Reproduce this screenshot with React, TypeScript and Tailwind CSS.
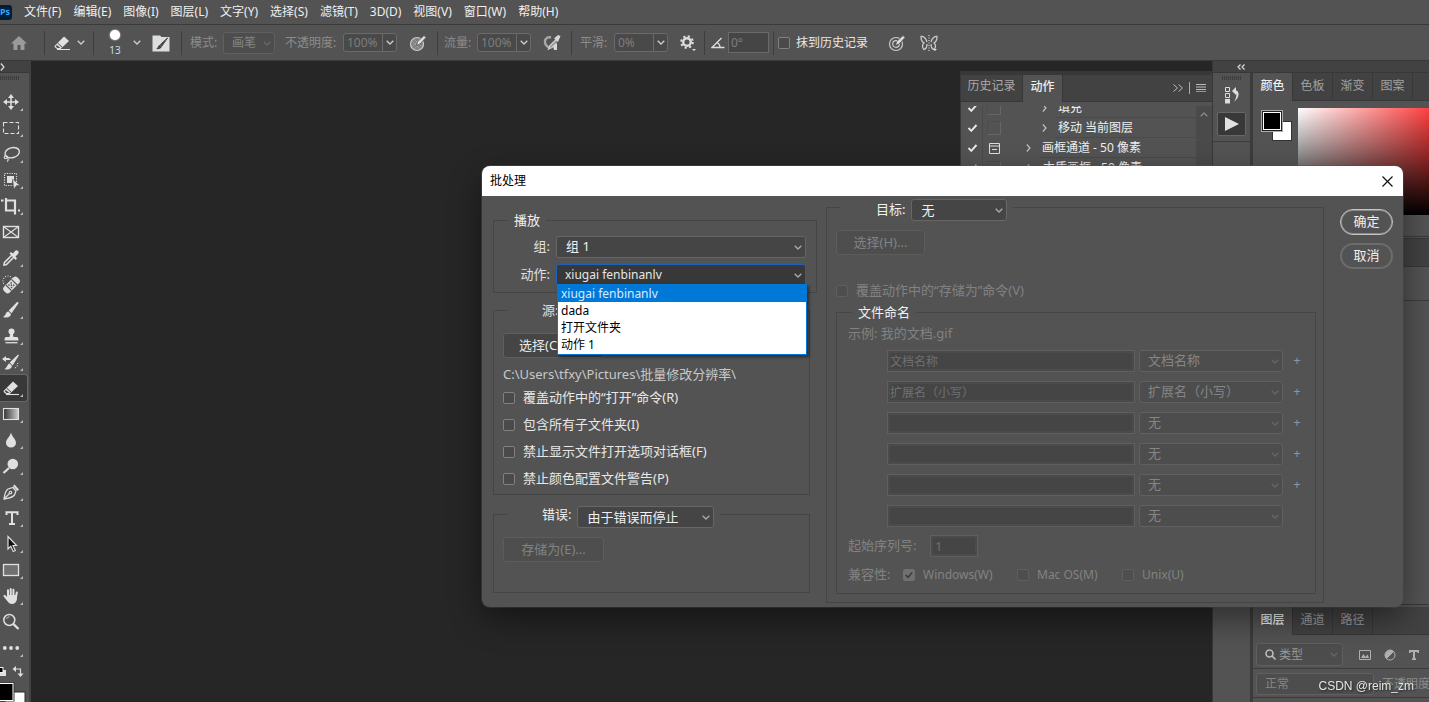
import { useId } from "react";
import type { ReactNode } from "react";

const menus = ["文件(F)", "编辑(E)", "图像(I)", "图层(L)", "文字(Y)", "选择(S)", "滤镜(T)", "3D(D)", "视图(V)", "窗口(W)", "帮助(H)"];

function Chevron({ className = "" }: { className?: string }) {
  return (
    <svg viewBox="0 0 8 5" className={`h-[5px] w-2 ${className}`} fill="none" stroke="currentColor" strokeWidth="1.3">
      <path d="M0.7 0.7 4 4 7.3 0.7" />
    </svg>
  );
}

function AngleRight({ className = "" }: { className?: string }) {
  return (
    <svg viewBox="0 0 5 8" className={`h-2 w-[5px] ${className}`} fill="none" stroke="currentColor" strokeWidth="1.2">
      <path d="M0.8 0.5 4 4 0.8 7.5" />
    </svg>
  );
}

function Select({
  id,
  label,
  options,
  disabled = false,
  open = false,
  className = "",
}: {
  id?: string;
  label?: string;
  options: string[];
  disabled?: boolean;
  open?: boolean;
  className?: string;
}) {
  const look = open
    ? "border-[#1b62b8] bg-[#383838] pl-2 text-xs text-[#e6e6e6]"
    : disabled
      ? "border-[#606060] bg-[#4d4d4d] pl-2 text-[#858585]"
      : "border-[#666] bg-[#454545] pl-[9px] text-[#f0f0f0]";
  return (
    <div className={`grid h-[22px] ${className}`}>
      <select
        id={id}
        aria-label={label}
        disabled={disabled}
        className={`col-start-1 row-start-1 w-full appearance-none rounded-[3px] border pr-4 outline-none disabled:opacity-100 ${look}`}
      >
        {options.map((o) => (
          <option key={o}>{o}</option>
        ))}
      </select>
      <Chevron
        className={`pointer-events-none col-start-1 row-start-1 mt-px mr-1 self-center justify-self-end ${disabled ? "text-[#666]" : "text-[#aaa]"}`}
      />
    </div>
  );
}

function Check({ children, disabled = false, checked = false }: { children: ReactNode; disabled?: boolean; checked?: boolean }) {
  const id = useId();
  return (
    <div className={`flex items-center gap-2 ${disabled ? "text-[#828282]" : "text-[#e8e8e8]"}`}>
      <div className="grid size-3 place-items-center">
        <input
          id={id}
          type="checkbox"
          disabled={disabled}
          defaultChecked={checked}
          className={`col-start-1 row-start-1 size-3 appearance-none rounded-[2px] border ${
            disabled ? "border-[#5f5f5f] bg-[#4e4e4e] checked:border-[#707070] checked:bg-[#707070]" : "border-[#808080] bg-[#4a4a4a]"
          }`}
        />
        {checked && (
          <svg viewBox="0 0 8 8" className="pointer-events-none col-start-1 row-start-1 size-2" fill="none" stroke="#3c3c3c" strokeWidth="1.6">
            <path d="M0.8 4 3 6.4 7.2 1.4" />
          </svg>
        )}
      </div>
      <label htmlFor={id}>{children}</label>
    </div>
  );
}

function ComboBox({ label, value }: { label: string; value: string }) {
  return (
    <div className="flex h-[19px] w-[54px] shrink-0 rounded-[3px] border border-[#6a6a6a] bg-[#494949]">
      <input aria-label={label} defaultValue={value} disabled className="w-[38px] min-w-0 pl-[3px] text-[#7d7d7d]" />
      <button aria-label={`${label} ▾`} className="grid flex-1 place-items-center border-l border-[#6a6a6a] text-[#ccc]">
        <Chevron />
      </button>
    </div>
  );
}

const Sep = () => <div className="h-6 w-px shrink-0 bg-[#3e3e3e]" />;

function Eraser() {
  return (
    <>
      <path d="M4 15.500 13 6.500 18 11 9.500 19H6L3.500 17Z" fill="#e0e0e0" stroke="none" />
      <path d="M6.500 13 11.500 17.500" stroke="#4a4a4a" strokeWidth="1" />
      <path d="M5.800 15 9.300 18H6.600L4.800 16.600Z" fill="#4a4a4a" stroke="none" />
      <path d="M6 19.500H19" />
    </>
  );
}

type Tool = { name: string; art: ReactNode; corner?: boolean; active?: boolean };

const tools: Tool[] = [
  {
    name: "移动",
    art: (
      <>
        <path d="M11 7V19M5 13H17" strokeWidth="1.500" />
        <path d="M11 5 14 9H8ZM11 21 8 17H14ZM3 13 7 10V16ZM19 13 15 16V10Z" fill="#e0e0e0" stroke="none" />
      </>
    ),
  },
  { name: "选框", art: <rect x="3.500" y="7.500" width="15" height="11" strokeDasharray="4 2" /> },
  {
    name: "套索",
    art: (
      <>
        <ellipse cx="12.200" cy="11.700" rx="7.300" ry="5" transform="rotate(-14 12.200 11.700)" strokeWidth="1.400" />
        <path d="M5.500 14.500C3.500 15.500 4 18 6 17.500S8 15 6 14.800M7.500 17.500C9 18.500 8 20 7 20.500" />
      </>
    ),
  },
  {
    name: "对象选择",
    art: (
      <>
        <rect x="4.500" y="6.500" width="12" height="12" strokeDasharray="1.200 1.200" />
        <path d="M7 9H14V14L12 13V16H7Z" fill="#e0e0e0" stroke="none" />
        <path d="M12.500 12 20 18.500H16.500L14 22Z" fill="#e0e0e0" stroke="#535353" strokeWidth=".5" />
      </>
    ),
  },
  { name: "裁剪", art: <path d="M1 7.500H3.500M6 5V17.500H16M18 17.500H20M7 7.500H15V21.500" strokeWidth="2.200" /> },
  {
    name: "图框",
    art: (
      <>
        <rect x="3.500" y="7.500" width="15" height="11" strokeWidth="1.400" />
        <path d="M3.500 7.500 18.500 18.500M18.500 7.500 3.500 18.500" />
      </>
    ),
    corner: false,
  },
  {
    name: "吸管",
    art: (
      <>
        <path d="M12 10 4.500 17.500 4 20 6.500 19.500 14 12" strokeWidth="1.600" />
        <path d="M9.500 8.500 11 7 13 8.500 15 6C17 4 20 7 18 9L15.500 11.500 17 13.500 15.500 15Z" fill="#e0e0e0" stroke="none" />
      </>
    ),
  },
  {
    name: "修复",
    art: (
      <>
        <circle cx="8" cy="10" r="5" strokeDasharray="1 1.500" />
        <g transform="rotate(-45 11.500 14)">
          <rect x="2" y="10" width="19" height="8" rx="3" fill="#e0e0e0" stroke="none" />
          <path d="M7.500 10V18M15.500 10V18" stroke="#535353" />
          <g fill="#535353" stroke="none">
            <rect x="9" y="11.500" width="1.500" height="1.500" />
            <rect x="12" y="11.500" width="1.500" height="1.500" />
            <rect x="10.500" y="13.200" width="1.500" height="1.500" />
            <rect x="9" y="15" width="1.500" height="1.500" />
            <rect x="12" y="15" width="1.500" height="1.500" />
          </g>
        </g>
      </>
    ),
  },
  {
    name: "画笔",
    art: (
      <>
        <path d="M17.500 5.500 9.500 13.500 11.500 15.500 18 6Z" fill="#e0e0e0" />
        <path d="M8.500 14.500C5.500 14.500 6.500 18 3 20 7 21.500 11 20 11 17Z" fill="#e0e0e0" stroke="none" />
      </>
    ),
  },
  {
    name: "图章",
    art: (
      <>
        <circle cx="11.500" cy="8.500" r="3" fill="#e0e0e0" stroke="none" />
        <path d="M10.300 10H12.700L13.500 14H17C18.500 14 18.500 17.500 18.500 17.500H4.500S4.500 14 6 14H9.500Z" fill="#e0e0e0" stroke="none" />
        <path d="M5.500 19.700H17.500" strokeWidth="1.300" />
      </>
    ),
  },
  {
    name: "历史记录画笔",
    art: (
      <>
        <path d="M18.500 6 10.500 13.500 12.500 15.500Z" fill="#e0e0e0" />
        <path d="M9.500 14.500C7 15 8 18 4.500 20 8 21.500 11.500 20 12 17Z" fill="#e0e0e0" stroke="none" />
        <path d="M2 10 6 7V13ZM6 9H9L11 11H6Z" fill="#e0e0e0" stroke="none" />
        <path d="M15 19C17.500 17.500 18 15.500 17.500 12.500" strokeDasharray="1 1.500" />
      </>
    ),
  },
  { name: "橡皮擦", art: <Eraser />, active: true },
  {
    name: "渐变",
    art: (
      <>
        <defs>
          <linearGradient id="tool-gradient">
            <stop offset="0" stopColor="#333" />
            <stop offset="1" stopColor="#d0d0d0" />
          </linearGradient>
        </defs>
        <rect x="3.500" y="7.500" width="15" height="11" fill="url(#tool-gradient)" />
      </>
    ),
  },
  { name: "模糊", art: <path d="M11 5.500C12 10 16 12 16 16A5 4.500 0 0 1 6 16C6 12 10 10 11 5.500Z" fill="#e0e0e0" stroke="none" /> },
  {
    name: "减淡",
    art: (
      <>
        <circle cx="12.800" cy="11" r="5.300" fill="#e0e0e0" stroke="none" />
        <path d="M9 15 3.500 20" strokeWidth="2.200" />
      </>
    ),
  },
  {
    name: "钢笔",
    art: (
      <>
        <path d="M4 20C4.500 16 5 12 8 10L13 8.500 16 12 14.500 16C12 19 8 19.500 4 20ZM4.500 19.500 9.500 14.500" strokeWidth="1.300" />
        <circle cx="10.500" cy="13.500" r="1.300" />
        <path d="M13 7 14.500 5.500 19 10.500 17.500 12Z" fill="#e0e0e0" stroke="none" />
      </>
    ),
  },
  { name: "文字", art: <path d="M6.500 10V7.300H17.500V10M12 6.800V19.500M9 19H15" strokeWidth="2" /> },
  {
    name: "路径选择",
    art: <path d="M8 5.500V18L10.800 15.200 13.300 20.500 15.300 19.500 13 14.500H16.500Z" fill="#111" strokeWidth="1.200" />,
  },
  { name: "矩形", art: <rect x="3.500" y="7.500" width="15" height="11" fill="#707070" strokeWidth="1.300" /> },
  {
    name: "抓手",
    art: (
      <g strokeLinecap="round">
        <path d="M8 13V7.300M10.700 12V6M13.400 12.500V6.800M16 14 16.800 9.500M4.500 12.800 8 17" strokeWidth="2" />
        <path d="M7 12H17V16C16.500 19 14.500 21 12 21 8.500 21 7.500 18 4 13.500L5 12.500 7 14Z" fill="#e0e0e0" stroke="none" />
      </g>
    ),
  },
  {
    name: "缩放",
    art: (
      <>
        <circle cx="9.300" cy="11" r="5.500" strokeWidth="1.500" />
        <path d="M6.500 10A3.500 3.500 0 0 1 9.500 7.800" strokeWidth=".8" />
        <path d="M13.500 15.200 18.500 20" strokeWidth="2.300" />
      </>
    ),
    corner: false,
  },
  {
    name: "更多工具",
    art: (
      <g fill="#e0e0e0" stroke="none">
        <circle cx="4.800" cy="13" r="1.900" />
        <circle cx="11" cy="13" r="1.900" />
        <circle cx="17.200" cy="13" r="1.900" />
      </g>
    ),
  },
];

function Brush({ children }: { children?: ReactNode }) {
  return (
    <svg viewBox="0 0 18 18" className="size-[18px]" fill="none" stroke="#ccc" strokeWidth="1.200">
      {children}
      <path d="M15 1.500 17 3.500 11 10 7.500 11.500 8.500 7.800Z" fill="#e0e0e0" stroke="#535353" strokeWidth=".8" />
    </svg>
  );
}

function OptionsBar() {
  return (
    <div className="flex h-9 shrink-0 items-center border-b border-[#3a3a3a] bg-[#535353] text-xs text-[#8c8c8c]">
      <button aria-label="主页" className="flex w-11 shrink-0 justify-center">
        <svg viewBox="0 0 18 16" className="mr-1.5 h-4 w-[18px]" fill="#9a9a9a">
          <path d="M9 1 17 8.500H14.500V15H10.500V10H7.500V15H3.500V8.500H1Z" />
        </svg>
      </button>
      <Sep />
      <button aria-label="橡皮擦工具" className="flex w-12 shrink-0 items-center gap-1 pl-1.5 text-[#ccc]">
        <svg viewBox="0 0 22 26" className="h-[26px] w-[22px]" fill="none" stroke="#e0e0e0">
          <Eraser />
        </svg>
        <Chevron />
      </button>
      <Sep />
      <button aria-label="画笔预设" className="flex w-[52px] shrink-0 items-center gap-3 pl-[15px] text-[#ccc]">
        <span className="flex w-3 flex-col items-center text-[10px] leading-3 text-[#c4dcf0]">
          <span className="mb-1 size-2.5 rounded-full bg-white shadow-[0_0_2px_#fff]" />
          13
        </span>
        <Chevron className="shrink-0" />
      </button>
      <button aria-label="画笔设置" className="ml-1.5 flex w-[29px] shrink-0">
        <svg viewBox="0 0 18 18" className="size-[18px]">
          <path d="M.5 1.500H8L9.500 3H17.500V17.500H.5Z" fill="#ddd" />
          <path d="M15.500 4 8.500 10.500 9.500 12.500Z" fill="#444" stroke="#444" />
          <path d="M8 11C6 11 6.500 13.500 4 15 7 15.500 9.500 14.500 9.500 13Z" fill="#444" />
        </svg>
      </button>
      <Sep />
      <span className="w-[33px] shrink-0 pl-2 whitespace-nowrap">模式:</span>
      <Select label="模式" options={["画笔"]} disabled className="ml-2 w-[52px] shrink-0" />
      <span className="w-[68px] shrink-0 pl-2.5 whitespace-nowrap">不透明度:</span>
      <ComboBox label="不透明度" value="100%" />
      <button aria-label="不透明度压力" className="flex w-10 shrink-0 pl-3">
        <Brush>
          <circle cx="8" cy="10" r="6.500" fill="#808080" />
          <path d="M3 7 11 15M5 5 13 13M3 13 11 5M5 15 13 8" stroke="#a8a8a8" strokeWidth=".7" />
        </Brush>
      </button>
      <Sep />
      <span className="w-[39px] shrink-0 pl-1.5 whitespace-nowrap">流量:</span>
      <ComboBox label="流量" value="100%" />
      <button aria-label="喷枪" className="flex w-10 shrink-0 pl-3">
        <svg viewBox="0 0 18 18" className="size-[18px]" fill="none" stroke="#ccc">
          <path d="M8 3.500C3 2 .5 7 3 11 4 12.500 5 13 6 13.500" strokeWidth="2.400" stroke="#a8a8a8" />
          <path d="M16.500 2.500 7 11.500 5.500 15 9 13.500 13 10" strokeWidth="1.300" fill="#999" />
          <path d="M11 4.500 15 8 17.500 2 15 1ZM10 12 14 9V16H11Z" fill="#d8d8d8" stroke="none" />
        </svg>
      </button>
      <Sep />
      <span className="w-[42px] shrink-0 pl-2 whitespace-nowrap">平滑:</span>
      <ComboBox label="平滑" value="0%" />
      <button aria-label="平滑选项" className="flex w-9 shrink-0 pl-3">
        <svg viewBox="0 0 16 18" className="h-[18px] w-4" fill="none" stroke="#ddd">
          <circle cx="7" cy="8" r="3.800" strokeWidth="2.400" />
          <circle cx="7" cy="8" r="5.800" strokeWidth="2" strokeDasharray="2.200 2.355" />
          <path d="M12 15H16L14 17Z" fill="#ddd" stroke="none" />
        </svg>
      </button>
      <Sep />
      <svg viewBox="0 0 14 12" className="ml-1.5 h-3 w-3.5 shrink-0" fill="none" stroke="#ddd" strokeWidth="1.300">
        <path d="M10.500 1 1 10.500H13.500M6 5.500C8 6.500 9 8 9 10.500" />
      </svg>
      <input
        aria-label="角度"
        disabled
        defaultValue="0°"
        className="ml-[3px] h-[21px] w-[41px] shrink-0 border border-[#6a6a6a] bg-[#454545] pl-0.5 text-[#7d7d7d]"
      />
      <div className="ml-1 shrink-0">
        <Sep />
      </div>
      <div className="ml-1 shrink-0 pr-5 whitespace-nowrap *:gap-1.5">
        <Check>抹到历史记录</Check>
      </div>
      <button aria-label="大小压力" className="flex w-8 shrink-0">
        <Brush>
          <circle cx="8" cy="10" r="6.500" />
          <circle cx="8" cy="10" r="3.300" />
        </Brush>
      </button>
      <button aria-label="对称" className="flex shrink-0">
        <svg viewBox="0 0 18 18" className="size-[18px]" fill="none" stroke="#ccc" strokeWidth="1.300">
          <path d="M7 8C6 4 3 2 1 2.500 1 5 2 8 4 9 2 10 2 14 4 15.500 6 15 7 13 7 10M11 8C12 4 15 2 17 2.500 17 5 16 8 14 9 16 10 16 14 14 15.500 12 15 11 13 11 10" />
          <path d="M9 1V17" strokeDasharray="1 1.500" />
          <path d="M13 15H17L15 17Z" fill="#ddd" stroke="none" />
        </svg>
      </button>
    </div>
  );
}

const Grip = ({ className = "" }: { className?: string }) => (
  <div className={`h-1 w-5 bg-[repeating-linear-gradient(90deg,#3c3c3c_0_1px,transparent_1px_2px)] ${className}`} />
);

function Toolbar() {
  return (
    <aside className="flex w-[31px] shrink-0 flex-col border-r-2 border-[#424242] bg-[#535353]">
      <div className="flex h-3 shrink-0 items-center border-b border-[#383838] bg-[#424242] text-[#ddd]">
        <AngleRight className="h-1.5" />
      </div>
      <div className="h-4 shrink-0 pt-[3px]">
        <Grip />
      </div>
      {tools.map((t) => (
        <button
          key={t.name}
          aria-label={t.name}
          className={`h-[26px] w-[27px] shrink-0 ${t.active ? "rounded-r-[3px] bg-[#383838] ring-1 ring-[#666]" : ""}`}
        >
          <svg viewBox="0 0 26 26" className="size-[26px]" fill="none" stroke="#e0e0e0" strokeWidth="1.100">
            {t.art}
            {t.corner !== false && <path d="M23 19V22H20Z" fill="#bbb" stroke="none" />}
          </svg>
        </button>
      ))}
      <svg viewBox="0 0 26 42" className="h-[42px] w-[26px] shrink-0" fill="none">
        <rect x="0" y="9" width="6" height="6" fill="#e0e0e0" />
        <rect x="-2" y="6.500" width="5" height="5" fill="#000" stroke="#eee" />
        <path d="M15 8H20.500V14" stroke="#ddd" strokeWidth="1.200" />
        <path d="M16 5V11L12.500 8ZM17.500 12.500H23.500L20.500 16Z" fill="#ddd" />
        <rect x="5" y="31" width="20" height="20" fill="#fff" stroke="#2a2a2a" />
        <rect x="-6" y="21.500" width="20.500" height="19" fill="#333" />
        <rect x="-6" y="22.500" width="19" height="17" fill="#000" stroke="#fff" />
      </svg>
    </aside>
  );
}

function ActionRow({ text, indent, dialog = false }: { text: string; indent: boolean; dialog?: boolean }) {
  return (
    <li className="flex h-5 shrink-0 items-center">
      <svg viewBox="0 0 10 8" className="ml-1.5 h-2 w-[11px]" fill="none" stroke="#e8e8e8" strokeWidth="1.900">
        <path d="M1 4 3.800 6.800 9 1" />
      </svg>
      <span className="ml-1 h-full w-px bg-[#4a4a4a]" />
      {dialog ? (
        <svg viewBox="0 0 11 11" className="ml-1.5 size-[11px]" fill="none" stroke="#ddd">
          <path d="M.5 .5H10.500V10.500H.5ZM.5 3H10.500M3 6.500H8" />
        </svg>
      ) : (
        <span className="ml-1 size-3.5 border border-t-[#4c4c4c] border-r-[#666] border-b-[#666] border-l-[#4c4c4c]" />
      )}
      <AngleRight className={`text-[#c0c0c0] ${indent ? "ml-[41px]" : "ml-[26px]"}`} />
      <span className="ml-2 flex h-full flex-1 items-center border-b border-[#4a4a4a] pl-[3px] whitespace-nowrap">{text}</span>
    </li>
  );
}

function ActionsPanel() {
  return (
    <section className="absolute top-[10px] right-0 h-40 w-[252px] border-t-4 border-l border-[#383838] bg-[#535353] text-xs text-[#f0f0f0]">
      <div className="flex h-[27px] bg-[#424242]">
        <button className="w-[62px] border-r border-b border-[#383838] pb-1 text-[#aaa]">历史记录</button>
        <button className="w-[39px] bg-[#535353] pb-1 font-medium">动作</button>
        <div className="flex flex-1 items-center justify-end border-b border-l border-[#383838] pr-1.5 text-[#bbb]">
          <svg viewBox="0 0 10 8" className="h-2 w-2.5" fill="none" stroke="#bbb">
            <path d="M.5 .5 4.500 4 .5 7.500M5.500 .5 9.500 4 5.500 7.500" />
          </svg>
          <span className="mx-1.5 h-3 w-px bg-[#aaa]" />
          <svg viewBox="0 0 10 8" className="h-2 w-2.5" stroke="#bbb">
            <path d="M0 .5H10M0 3H10M0 5.500H10M0 7.800H10" />
          </svg>
        </div>
      </div>
      <div className="flex h-32 pt-1">
        <div className="flex-1 overflow-hidden">
          <ul className="-mt-2 flex flex-col">
            <ActionRow text="填充" indent />
            <ActionRow text="移动 当前图层" indent />
            <ActionRow text="画框通道 - 50 像素" indent={false} dialog />
            <ActionRow text="木质画框 - 50 像素" indent={false} />
          </ul>
        </div>
        <div className="flex w-4 justify-center bg-[#4a4a4a] pt-1.5 text-[#888]">
          <Chevron className="rotate-180" />
        </div>
      </div>
    </section>
  );
}

function Tabs({ items, active }: { items: string[]; active?: string }) {
  return (
    <div className="flex h-7 shrink-0 bg-[#424242] text-xs text-[#a0a0a0]">
      {items.map((t) => (
        <button
          key={t}
          className={`w-10 shrink-0 border-r border-[#383838] pb-0.5 ${t === active ? "bg-[#535353] font-medium text-[#f0f0f0]" : "border-b"}`}
        >
          {t}
        </button>
      ))}
      <div className="flex-1 border-b border-[#383838]" />
    </div>
  );
}

function RightDock() {
  return (
    <aside className="flex w-[217px] shrink-0 flex-col border-l border-[#383838]">
      <div className="flex h-3 shrink-0 items-center border-b border-[#383838] bg-[#424242] pl-6">
        <svg viewBox="0 0 8 6" className="h-1.5 w-2" fill="none" stroke="#ddd" strokeWidth="1.200">
          <path d="M3.500 .5 1 3 3.500 5.500M7.500 .5 5 3 7.500 5.500" />
        </svg>
      </div>
      <div className="flex min-h-0 flex-1">
        <div className="flex w-[37px] shrink-0 flex-col items-center">
          <Grip className="mt-[3px] shrink-0" />
          <button aria-label="历史记录" className="mt-1.5 mb-2 shrink-0">
            <svg viewBox="0 0 16 18" className="h-[18px] w-4" fill="none" stroke="#ddd">
              <path d="M1.500 1.500H5.500V5.500H1.500ZM1.500 7.500H5.500V11.500H1.500Z" />
              <path d="M1 13H6V17.500H1Z" fill="#ddd" stroke="none" />
              <path d="M8 5 12 1V9ZM11 4C16 5 16 11 10 16 13 11 13 7 11 7Z" fill="#ddd" stroke="none" />
            </svg>
          </button>
          <button aria-label="动作" className="grid h-6 w-[29px] shrink-0 place-items-center rounded-[2px] border border-[#666] bg-[#383838]">
            <svg viewBox="0 0 14 14" className="size-3.5" fill="#e0e0e0">
              <path d="M0 0 14 7 0 14Z" />
            </svg>
          </button>
          <div className="mt-[5px] h-px w-full shrink-0 bg-[#3c3c3c]" />
        </div>
        <div className="flex min-w-0 flex-1 flex-col border-l-[3px] border-[#3c3c3c]">
          <Tabs items={["颜色", "色板", "渐变", "图案"]} active="颜色" />
          <div className="flex h-[136px] shrink-0 border-b border-[#3a3a3a] pt-[7px]">
            <svg viewBox="0 0 45 36" className="h-9 w-[45px] shrink-0">
              <rect x="19.500" y="13.500" width="19" height="19" fill="#fff" stroke="#333" />
              <rect x="8.500" y="2.500" width="21" height="21" fill="#222" stroke="#aaa" />
              <rect x="10.500" y="4.500" width="17" height="17" fill="#000" stroke="#fff" />
            </svg>
            <div className="h-[107px] flex-1 bg-[linear-gradient(to_bottom,transparent,#000),linear-gradient(to_right,#fff,#ff4040)]" />
          </div>
          <div className="mt-px h-[29px] shrink-0 border-y border-[#383838] bg-[#424242]" />
          <div className="h-[34px] shrink-0 border-b border-[#3c3c3c]" />
          <div className="h-[304px] shrink-0 border-b border-[#383838]" />
          <div className="mt-0.5 shrink-0">
            <Tabs items={["图层", "通道", "路径"]} active="图层" />
          </div>
          <div className="flex h-[34px] shrink-0 items-center gap-4 border-b border-[#3c3c3c] pt-1.5 pl-[3px] text-xs text-[#999]">
            <div className="grid h-[23px] w-[87px] shrink-0 items-center rounded-[3px] border border-[#606060] bg-[#4d4d4d]">
              <svg viewBox="0 0 11 11" className="col-start-1 row-start-1 ml-2 size-[11px]" fill="none" stroke="#bbb" strokeWidth="1.600">
                <circle cx="4.500" cy="4.500" r="3.500" />
                <path d="M7 7 10.500 10.500" />
              </svg>
              <select aria-label="图层筛选" className="col-start-1 row-start-1 w-full appearance-none pl-[22px]">
                <option>类型</option>
              </select>
              <Chevron className="pointer-events-none col-start-1 row-start-1 mr-1 justify-self-end text-[#666]" />
            </div>
            <div className="flex flex-1 items-center gap-[13px]">
              <svg viewBox="0 0 12 10" className="h-2.5 w-3 shrink-0" fill="none" stroke="#b0b0b0">
                <path d="M.5 .5H11.500V9.500H.5Z" />
                <path d="M2 8 4.500 4 6.500 7 8.500 4.500 10 8Z" fill="#b0b0b0" stroke="none" />
              </svg>
              <svg viewBox="0 0 12 12" className="size-3 shrink-0" fill="none" stroke="#b0b0b0">
                <circle cx="6" cy="6" r="5" />
                <path d="M2.500 9.500A5 5 0 0 1 9.500 2.500Z" fill="#b0b0b0" />
              </svg>
              <svg viewBox="0 0 10 10" className="size-2.5 shrink-0" fill="none" stroke="#b0b0b0" strokeWidth="2">
                <path d="M.6 3V1H9.400V3M5 1V9.500M3 9.200H7" />
              </svg>
            </div>
          </div>
          <div className="flex h-[29px] shrink-0 items-center border-b border-[#3c3c3c] pt-0.5 pl-[3px] text-xs whitespace-nowrap text-[#8a8a8a]">
            <Select label="混合模式" options={["正常"]} disabled className="mr-2 w-[118px] shrink-0" />
            不透明度:
          </div>
        </div>
      </div>
    </aside>
  );
}

const boxClass = "min-w-0 border border-[#454545]";
const disabledButton = "block h-[25px] rounded-[3px] border border-[#5c5c5c] bg-[#4e4e4e] text-[#828282]";

const nameRows = [
  { value: "文档名称", choice: "文档名称" },
  { value: "扩展名（小写）", choice: "扩展名（小写）" },
  { value: "", choice: "无" },
  { value: "", choice: "无" },
  { value: "", choice: "无" },
  { value: "", choice: "无" },
];

function BatchDialog() {
  return (
    <div
      role="dialog"
      aria-label="批处理"
      className="absolute top-[166px] right-[26px] w-[921px] rounded-lg bg-[#535353] text-[13px] text-[#e0e0e0] shadow-[0_12px_32px_rgba(0,0,0,0.45),0_0_0_1px_rgba(90,90,90,0.5)]"
    >
      <header className="flex h-[30px] items-center justify-between rounded-t-lg bg-white pr-2.5 pl-2 text-xs text-black">
        <h1>批处理</h1>
        <button aria-label="关闭">
          <svg viewBox="0 0 11 11" className="size-[11px]" stroke="#111" strokeWidth="1.200">
            <path d="M.5 .5 10.500 10.500M10.500 .5 .5 10.500" />
          </svg>
        </button>
      </header>
      <div className="flex pr-2.5 pb-1 pl-[11px]">
        <div className="w-[324px] shrink-0 pt-3.5">
          <fieldset className={`${boxClass} pr-2.5 pb-1.5`}>
            <legend className="ml-3.5 h-5 px-1.5 leading-5 text-[#f0f0f0]">播放</legend>
            <div className="flex items-center gap-1.5 pt-1.5">
              <label htmlFor="set" className="w-14 shrink-0 text-right">
                组:
              </label>
              <Select id="set" options={["组 1"]} className="flex-1" />
            </div>
            <div className="flex items-center gap-1.5 pt-1.5">
              <label htmlFor="action" className="w-14 shrink-0 text-right">
                动作:
              </label>
              <div className="relative flex-1">
                <Select id="action" options={["xiugai fenbinanlv"]} open />
                <ul
                  role="listbox"
                  aria-label="动作"
                  className="absolute top-5 left-px z-10 w-full border border-[#0078d7] bg-white pb-px text-xs leading-[17px] text-black shadow-[2px_2px_3px_rgba(0,0,0,0.5)] *:h-[17px] *:pl-[3px]"
                >
                  <li role="option" aria-selected="true" className="bg-[#0078d7] text-[#d9eaff]">
                    xiugai fenbinanlv
                  </li>
                  <li role="option" aria-selected="false">
                    dada
                  </li>
                  <li role="option" aria-selected="false">
                    打开文件夹
                  </li>
                  <li role="option" aria-selected="false">
                    动作 1
                  </li>
                </ul>
              </div>
            </div>
          </fieldset>

          <fieldset className={`${boxClass} mt-[9px] mr-[7px] pb-0.5 pl-[9px]`}>
            <legend className="ml-1 flex h-4 gap-1.5 pr-1 pl-[35px] leading-4">
              <label htmlFor="source">源:</label>
              <Select id="source" options={["文件夹"]} className="w-[240px]" />
            </legend>
            <button className="mt-[15px] block h-[25px] w-[101px] rounded-[3px] border border-[#5f5f5f] bg-[#454545] pl-[15px] text-left text-[#e8e8e8]">
              选择(C)...
            </button>
            <p className="mt-1.5 h-5 leading-5 text-[#c8c8c8]">C:\Users\tfxy\Pictures\批量修改分辨率\</p>
            <div className="*:h-[27px]">
              <Check>覆盖动作中的“打开”命令(R)</Check>
              <Check>包含所有子文件夹(I)</Check>
              <Check>禁止显示文件打开选项对话框(F)</Check>
              <Check>禁止颜色配置文件警告(P)</Check>
            </div>
          </fieldset>

          <fieldset className={`${boxClass} mt-[11px] mr-[7px] pb-[30px] pl-[9px]`}>
            <legend className="ml-1 flex h-4 gap-1.5 pr-1.5 pl-[35px] leading-4 text-[#f0f0f0]">
              <label htmlFor="errors">错误:</label>
              <Select id="errors" options={["由于错误而停止"]} className="w-[137px]" />
            </legend>
            <button disabled className={`${disabledButton} mt-[15px] w-[101px]`}>
              存储为(E)...
            </button>
          </fieldset>
        </div>

        <fieldset className={`${boxClass} mt-[3px] ml-[9px] flex-1 pr-[7px] pb-2 pl-[9px]`}>
          <legend className="ml-1 flex h-4 gap-1.5 pr-1.5 pl-9 leading-5 text-[#f0f0f0]">
            <label htmlFor="target">目标:</label>
            <Select id="target" options={["无"]} className="w-24" />
          </legend>
          <button disabled className={`${disabledButton} mt-[15px] w-[89px]`}>
            选择(H)...
          </button>
          <div className="mt-[26px] *:h-5">
            <Check disabled>覆盖动作中的“存储为”命令(V)</Check>
          </div>
          <fieldset className={`${boxClass} mt-px pr-2 pb-2 pl-[11px] text-[#828282]`}>
            <legend className="ml-1 h-5 px-1.5 leading-5 text-[#f0f0f0]">文件命名</legend>
            <p className="mt-px h-5 leading-5">示例: 我的文档.gif</p>
            <div className="mt-[7px] flex flex-col gap-[9px] pl-[39px]">
              {nameRows.map((r, i) => (
                <div key={i} className="flex h-[22px] items-center gap-1">
                  <input
                    aria-label={`文件名 ${i + 1}`}
                    disabled
                    defaultValue={r.value}
                    className="h-full min-w-0 flex-1 border border-[#5f5f5f] bg-[#454545] pl-0.5 text-xs text-[#707070] shadow-[inset_0_0_0_2px_#4b4b4b]"
                  />
                  <Select label={`命名规则 ${i + 1}`} options={[r.choice]} disabled className="w-36 shrink-0" />
                  {i < 5 ? <span className="w-5 shrink-0 text-center text-[#8496a8]">+</span> : <span className="w-5 shrink-0" />}
                </div>
              ))}
            </div>
            <div className="mt-2 flex h-[22px] items-center">
              <label htmlFor="serial" className="w-[82px]">
                起始序列号:
              </label>
              <input
                id="serial"
                disabled
                defaultValue="1"
                className="h-full w-12 border border-[#5f5f5f] bg-[#454545] pl-1 text-[#707070] shadow-[inset_0_0_0_2px_#4b4b4b]"
              />
            </div>
            <div className="mt-2 flex h-5 items-center">
              <span className="w-[55px]">兼容性:</span>
              <div className="flex text-xs">
                <div className="w-[114px]">
                  <Check disabled checked>
                    Windows(W)
                  </Check>
                </div>
                <div className="w-[105px]">
                  <Check disabled>Mac OS(M)</Check>
                </div>
                <Check disabled>Unix(U)</Check>
              </div>
            </div>
          </fieldset>
        </fieldset>

        <div className="ml-4 flex w-[53px] shrink-0 flex-col gap-2 pt-[13px] text-[#f0f0f0]">
          <button className="h-[26px] rounded-full border border-[#c4c4c4] ring-1 ring-[#8a8a8a] ring-inset">确定</button>
          <button className="h-[26px] rounded-full border-2 border-[#6c6c6c]">取消</button>
        </div>
      </div>
    </div>
  );
}

export default function App() {
  return (
    <div className="relative flex h-screen w-full flex-col overflow-hidden bg-[#535353] font-['Noto_Sans','Noto_Sans_CJK_SC',sans-serif] text-xs">
      <nav className="flex h-[25px] shrink-0 items-center gap-3 border-b border-[#3a3a3a] whitespace-nowrap text-[#f0f0f0]">
        <span className="flex h-[15px] w-3 items-center justify-end rounded-r-[3px] bg-[#001e36] pr-0.5 text-[9px] font-bold text-[#31a8ff]">Ps</span>
        {menus.map((m) => (
          <button key={m}>{m}</button>
        ))}
      </nav>
      <OptionsBar />
      <div className="flex min-h-0 flex-1">
        <Toolbar />
        <main className="relative min-w-0 flex-1 bg-[#262626]">
          <ActionsPanel />
        </main>
        <RightDock />
      </div>
      <BatchDialog />
      <p className="absolute right-[15px] bottom-2 font-['Liberation_Sans',sans-serif] text-xs text-[#e6e6e6] drop-shadow-[1px_1px_1px_#222]">CSDN @reim_zm</p>
    </div>
  );
}
